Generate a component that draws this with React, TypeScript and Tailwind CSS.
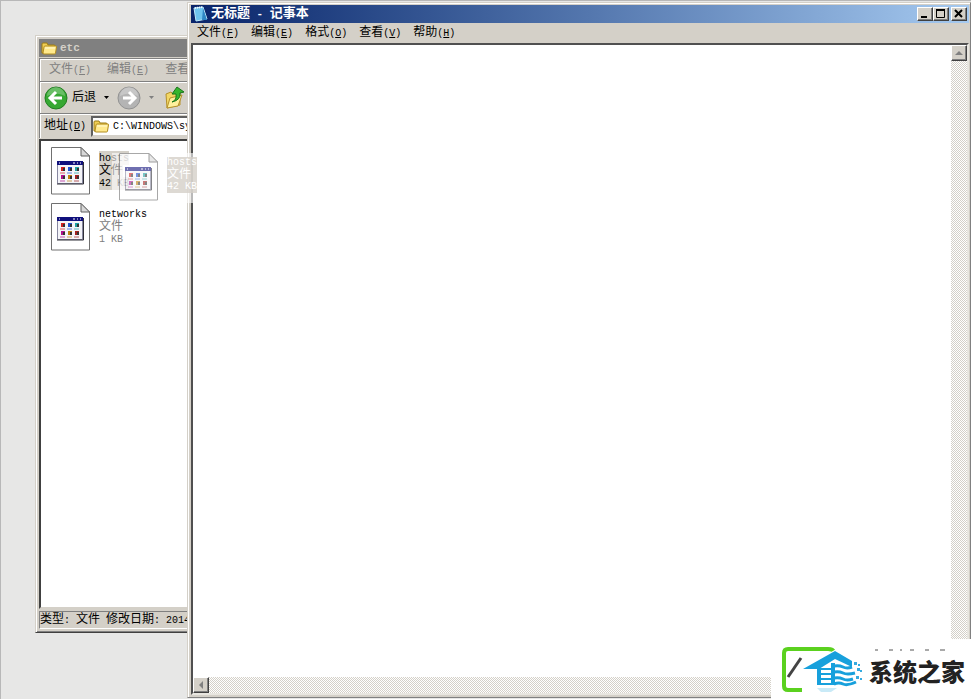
import type { ReactNode } from "react";

const ui = "font-['Liberation_Mono','Noto_Sans_CJK_SC',monospace]";
const dither = "bg-[repeating-conic-gradient(#ffffff_0_25%,#d4d0c8_0_50%)] bg-size-[2px_2px]";
const raised =
  "bg-[#d4d0c8] border border-t-white border-l-white border-r-[#404040] border-b-[#404040] shadow-[inset_-1px_-1px_0_#808080]";

/** Half-width Latin run next to 12px Chinese text. */
function Latin({ children }: { children: ReactNode }) {
  return <span className="text-[10px] whitespace-pre">{children}</span>;
}

function MenuItem({ label, hotkey }: { label: string; hotkey: string }) {
  return (
    <button type="button" className="whitespace-nowrap">
      {label}
      <Latin>
        (<span className="underline">{hotkey}</span>)
      </Latin>
    </button>
  );
}

function Folder() {
  return (
    <svg className="h-4 w-4 shrink-0" viewBox="0 0 16 16" aria-hidden="true">
      <path d="M1 13V4q0-1 1-1h4l1 2h6q1 0 1 1v7z" fill="#f0cf55" stroke="#9b7a13" />
      <path d="M2 13 3 7q.2-1 1-1h11q.7 0 .5 1l-1 6q-.1 1-1 1H2.500z" fill="#ffe98c" stroke="#b18c20" />
      <path d="M4 8h10" stroke="#fffbd6" />
    </svg>
  );
}

function FileIcon() {
  const dots = ["#d02020", "#2050d0", "#20a0a0", "#b01090", "#c08010", "#a02020"];
  return (
    <svg className="h-12 w-10 shrink-0" viewBox="0 0 40 48" aria-hidden="true">
      <path d="M.5.500h29.500l8.500 8.500v38H.500z" fill="#fff" stroke="#707070" />
      <path d="M30 .500V9h8.500z" fill="#d8d8d8" stroke="#606060" />
      <path d="M6.500 14.500h25v22h-25z" fill="#f4f4f8" stroke="#8888a0" />
      <path d="M6 14h26v4H6z" fill="#10107c" />
      <path d="M6 37h26.500V15" fill="none" stroke="#303038" />
      <path d="M22 16h2m2 0h1m2 0h1M8 16h1" stroke="#fff" />
      {dots.map((c, i) => (
        <g key={i} transform={`translate(${10 + (i % 3) * 7} ${20 + Math.floor(i / 3) * 8})`}>
          <path d="M0 0h4v4H0z" fill={c} />
          <path d="M2 1h2v3H2z" fill="#333" />
          <path d="M-1 6h5" stroke={c} opacity=".7" />
        </g>
      ))}
    </svg>
  );
}

function FileRow({ name, size, dragged = false }: { name: string; size: string; dragged?: boolean }) {
  return (
    <div className="flex h-12 gap-2">
      <FileIcon />
      <div className="mt-1 flex flex-col items-start text-[12px] leading-[12px] text-[#808080]">
        <span className={dragged ? "bg-[#d4d0c8] pt-px text-black" : "pt-px text-black"}>
          <Latin>{name}</Latin>
        </span>
        <span className={dragged ? "bg-[#d4d0c8] text-black" : ""}>文件</span>
        <span className={dragged ? "bg-[#d4d0c8] text-black" : ""}>
          <Latin>{size}</Latin>
        </span>
      </div>
    </div>
  );
}

function DragImage() {
  return (
    <div className="absolute top-[153px] left-[112px] z-20 flex h-[50px] w-[85px] gap-2 bg-white/60 pl-[7px]">
      <div className="opacity-60">
        <FileIcon />
      </div>
      <div className="mt-1 flex h-9 flex-1 flex-col overflow-hidden bg-[#d4d0c8]/80 text-[12px] leading-[12px] text-white">
        <Latin>hosts</Latin>
        <span>文件</span>
        <Latin>42 KB</Latin>
      </div>
    </div>
  );
}

function RoundArrow({ active }: { active: boolean }) {
  return (
    <svg className="h-6 w-6" viewBox="0 0 24 24" aria-hidden="true">
      <circle cx="12" cy="12" r="11" fill={active ? "#36a832" : "#b4b4b4"} stroke={active ? "#217d20" : "#929292"} />
      <path d="M3 10a9 9 0 0 1 18 0q-9-5-18 0" fill="#fff" opacity=".25" />
      <path
        d={active ? "M18 12H7M12 6l-6 6 6 6" : "M6 12h11M12 6l6 6-6 6"}
        fill="none"
        stroke="#fff"
        strokeWidth="3"
      />
    </svg>
  );
}

function Caret({ color }: { color: string }) {
  return (
    <svg className="h-[3px] w-[5px]" viewBox="0 0 5 3" aria-hidden="true">
      <path d="M0 0h5L2.500 3z" fill={color} />
    </svg>
  );
}

function Explorer() {
  return (
    <section className="absolute top-[35px] left-[35px] flex h-[598px] w-[420px] flex-col border border-t-[#d4d0c8] border-r-[#404040] border-b-[#404040] border-l-[#d4d0c8] bg-[#d4d0c8] p-[3px] shadow-[inset_1px_1px_0_#fff,inset_-1px_-1px_0_#808080]">
      <header className="flex h-[18px] shrink-0 items-center gap-[3px] bg-[#808080] pl-[2px] text-[11px] font-bold text-[#d4d0c8]">
        <Folder />
        <h2>etc</h2>
      </header>
      <nav className="mt-px flex h-6 shrink-0 items-center gap-4 border border-t-[#808080] border-r-0 border-b-[#808080] border-l-[#808080] pl-[9px] text-[12px] text-[#808080] shadow-[inset_1px_1px_0_#fff]">
        <MenuItem label="文件" hotkey="F" />
        <MenuItem label="编辑" hotkey="E" />
        <MenuItem label="查看" hotkey="V" />
      </nav>
      <div className="flex h-8 shrink-0 items-center border-b border-l border-[#808080] pl-1 text-[12px] shadow-[inset_1px_1px_0_#fff]">
        <button type="button" className="flex items-center gap-1">
          <RoundArrow active />
          后退
        </button>
        <button type="button" aria-label="后退列表" className="ml-2">
          <Caret color="#000" />
        </button>
        <button type="button" aria-label="前进" className="ml-2">
          <RoundArrow active={false} />
        </button>
        <button type="button" aria-label="前进列表" className="ml-2">
          <Caret color="#808080" />
        </button>
        <button type="button" aria-label="向上" className="ml-[11px]">
          <svg className="h-6 w-5" viewBox="0 0 20 24" aria-hidden="true">
            <path d="m1 8 5-2 2 2 7-2v13L2 22z" fill="#f3d766" stroke="#b5912b" />
            <path d="m5 12 12-3-4 11-11 2z" fill="#fff09c" stroke="#b5912b" />
            <path d="M7 16q5-2 4-8H7l5-7 7 5-4 1q1 7-8 9" fill="#35b52d" stroke="#18751a" />
          </svg>
        </button>
      </div>
      <div className="flex h-6 shrink-0 items-center border-l border-[#808080] pl-1 text-[12px] shadow-[inset_1px_1px_0_#fff]">
        <label htmlFor="address">
          地址
          <Latin>
            (<span className="underline">D</span>)
          </Latin>
        </label>
        <div className="ml-[5px] flex h-[21px] flex-1 items-center gap-1 border-2 border-[#606060] border-r-white border-b-[#d4d0c8] bg-white">
          <Folder />
          <input id="address" readOnly value="C:\WINDOWS\system32\drivers\etc" className="w-full text-[10px] outline-none" />
        </div>
      </div>
      <div className="mt-px flex flex-1 flex-col gap-2 border-2 border-[#404040] border-r-white border-b-[#d4d0c8] bg-white pt-[6px] pl-[10px]">
        <FileRow name="hosts" size="42 KB" dragged />
        <FileRow name="networks" size="1 KB" />
      </div>
      <footer className="mt-[2px] flex h-[18px] shrink-0 items-center border border-[#808080] border-r-white border-b-white text-[12px] whitespace-nowrap">
        类型<Latin>: </Latin>文件<Latin> </Latin>修改日期<Latin>: 2014-3-25 20:00</Latin>
      </footer>
    </section>
  );
}

function CaptionButton({ label, children }: { label: string; children: ReactNode }) {
  return (
    <button type="button" aria-label={label} className={`h-[14px] w-4 ${raised}`}>
      <svg className="h-3 w-[14px]" viewBox="0 0 14 12" fill="none" stroke="#000" aria-hidden="true">
        {children}
      </svg>
    </button>
  );
}

function ScrollArrow({ label, path }: { label: string; path: string }) {
  return (
    <button type="button" aria-label={label} className={`flex h-4 w-4 shrink-0 items-center justify-center ${raised}`}>
      <svg className="h-2 w-2" viewBox="0 0 8 8" aria-hidden="true">
        <path d={path} fill="#808080" />
      </svg>
    </button>
  );
}

function Notepad() {
  return (
    <main className="absolute right-0 top-[2px] bottom-px left-[187px] z-10 flex flex-col border border-t-[#d4d0c8] border-r-[#808080] border-b-[#808080] border-l-[#d4d0c8] bg-[#d4d0c8] pt-[2px] pr-px pb-[2px] pl-[3px] shadow-[inset_1px_1px_0_#fff]">
      <header className="flex h-[18px] shrink-0 items-center bg-linear-to-r from-[#0a246a] to-[#a6caf0] pr-[2px] pl-[2px] text-white">
        <svg className="h-4 w-4" viewBox="0 0 16 16" aria-hidden="true">
          <path d="m1 2 9-1 4 12-11 2z" fill="#6fc4ee" stroke="#bfe9fb" />
          <path d="M10 2 14 14H9z" fill="#2f86c4" />
          <path d="m2 2 8-1" stroke="#eefaff" strokeWidth="2" strokeDasharray="1 1" />
        </svg>
        <h1 className="ml-[2px] flex-1 text-[13px] leading-[18px] font-bold whitespace-pre">
          无标题<span className="text-[11px]"> - </span>记事本
        </h1>
        <CaptionButton label="最小化">
          <path d="M3 9h6" strokeWidth="2" />
        </CaptionButton>
        <CaptionButton label="最大化">
          <path d="M2.500 2.500h8v7h-8zM2 2.500h9" />
          <path d="M2 2h9" strokeWidth="2" />
        </CaptionButton>
        <span className="w-[2px]" />
        <CaptionButton label="关闭">
          <path d="m3 2 7 7m0-7-7 7" strokeWidth="2" />
        </CaptionButton>
      </header>
      <nav className="flex h-5 shrink-0 items-center gap-3 pl-[6px] text-[12px]">
        <MenuItem label="文件" hotkey="F" />
        <MenuItem label="编辑" hotkey="E" />
        <MenuItem label="格式" hotkey="O" />
        <MenuItem label="查看" hotkey="V" />
        <MenuItem label="帮助" hotkey="H" />
      </nav>
      <div className="grid min-h-0 flex-1 grid-cols-[1fr_16px] grid-rows-[1fr_16px] border-2 border-t-[#505050] border-r-[#e8e6e0] border-b-[#e8e6e0] border-l-[#505050]">
        <textarea aria-label="文本编辑" className="resize-none bg-white outline-none" />
        <div className={dither}>
          <ScrollArrow label="向上滚动" path="M0 6h8L4 2z" />
        </div>
        <div className={dither}>
          <ScrollArrow label="向左滚动" path="M6 0v8L2 4z" />
        </div>
        <div className="bg-[#d4d0c8]" />
      </div>
    </main>
  );
}

function Watermark() {
  return (
    <aside className="absolute right-0 bottom-0 z-30 flex h-[60px] w-[200px] items-center bg-white">
      <svg className="h-[60px] w-[200px] shrink-0" viewBox="0 0 200 60" fill="none" aria-hidden="true">
        <path d="M31 51H17q-4 0-4-4V14q0-4 4-4h40q5 0 6 3" stroke="#5bd11f" strokeWidth="4" />
        <path d="m17 38 13-19" stroke="#444" strokeWidth="3" />
        <path d="M32 30 64 12l17 10v6l-17-8-16 10z" fill="#17a0dc" stroke="#fff" strokeWidth="2" paintOrder="stroke" />
        <path d="M46 29h4v16h-4zM60 24h4v21h-4z" fill="#17a0dc" />
        <path d="M49 30h12M49 35h12M49 40h12M46 45h18" stroke="#17a0dc" strokeWidth="2" />
        <path
          d="M63 27q5-1 9 1t9 0M63 33q5-1 9 1t12 0M63 39q5-1 9 1t10 0M63 45q5-2 9 0t13-2"
          stroke="#17a0dc"
          strokeWidth="3"
        />
        <path d="M83 23h3v3h-3zm4 2h2v2h-2zm-1 4h3v3h-3zm3 2h2v2h-2zm-4 6h3v3h-3zm4 2h2v2h-2z" fill="#36abe0" />
        <path d="M46 49h20l-6 4H50z" fill="#c9eaf7" />
        <path d="M104 11h3m11 0h4m7 0h2m8 0h4m11 0h4m11 0h5" stroke="#555" />
      </svg>
      <strong className="-ml-[102px] mt-1 font-['Noto_Sans_CJK_SC',sans-serif] text-[24px] leading-8 font-black whitespace-nowrap text-[#222]">
        系统之家
      </strong>
    </aside>
  );
}

export default function App() {
  return (
    <div
      className={`relative h-screen overflow-hidden bg-[#e7e7e6] text-black shadow-[inset_1px_1px_0_#b8b8b8] ${ui}`}
    >
      <Explorer />
      <Notepad />
      <DragImage />
      <Watermark />
    </div>
  );
}
